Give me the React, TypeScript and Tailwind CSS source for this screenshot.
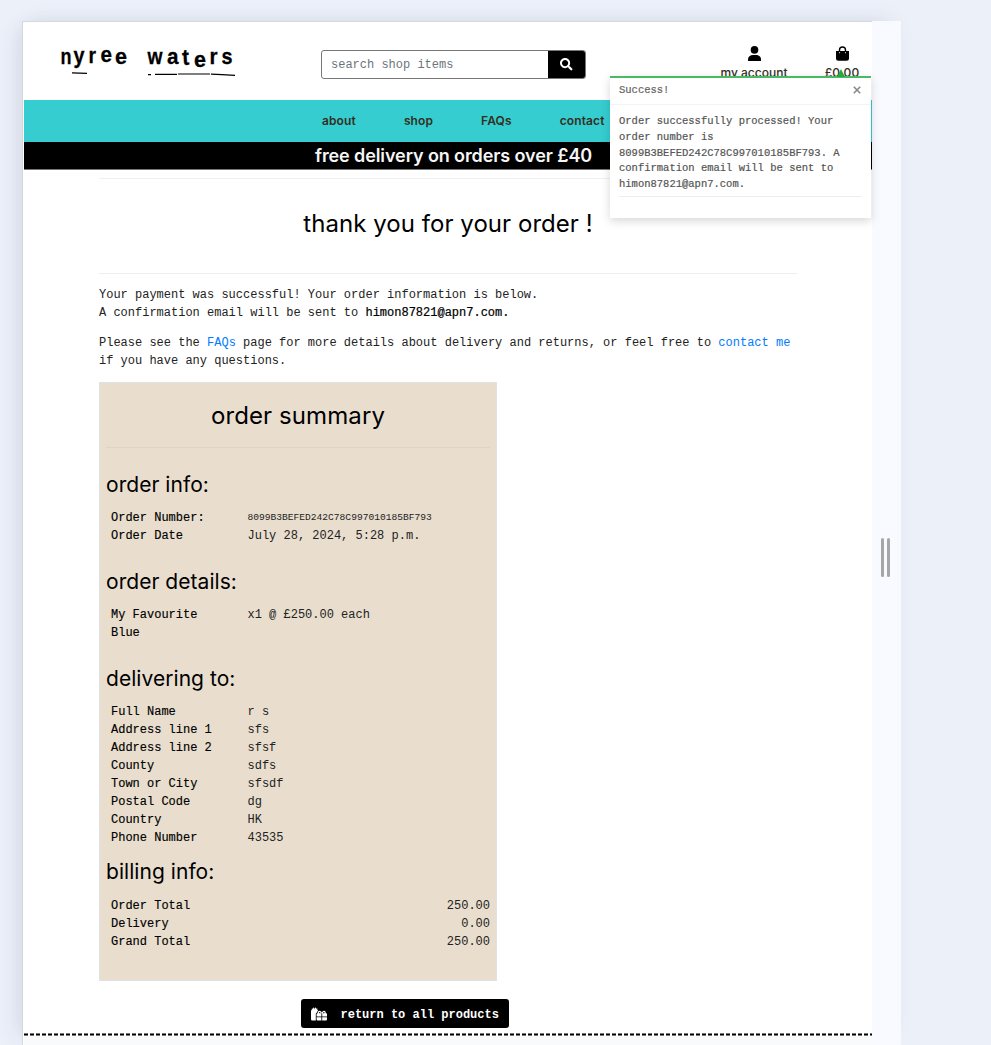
import React from "react";
import { FaGifts, FaSearch } from "react-icons/fa";

const logoLetters: [string, number, number, number, number][] = [
  ["n", 60.5, 63.5, 11, 0],
  ["y", 73.5, 63, 11, 0],
  ["r", 88.5, 63, 7.5, 0],
  ["e", 100.5, 62, 11.5, 0],
  ["e", 115, 64, 12, 0],
  ["w", 147.5, 64, 15, 0],
  ["a", 167, 64, 11.5, 0],
  ["t", 182.5, 65, 7, -3],
  ["e", 194, 66.5, 12, 0],
  ["r", 209.5, 64, 8, 0],
  ["s", 221.5, 64, 11, 0],
];

function Logo() {
  return (
    <svg className="ml-[31px] mt-[17px] h-[40px] w-[186px] shrink-0" viewBox="55 40 186 40">
      {logoLetters.map(([c, x, y, w, r], i) => (
        <text
          key={i}
          x={x}
          y={y}
          textLength={w}
          lengthAdjust="spacingAndGlyphs"
          transform={`rotate(${r} ${x} ${y})`}
          fontSize="22.5"
          fontWeight="700"
          fontFamily="'Liberation Sans', sans-serif"
          stroke="#000"
          strokeWidth="0.3"
        >
          {c}
        </text>
      ))}
      <path
        d="M72 72.8l15 .6M148 74.6h3M155 74.4h22M178 74h32M211 74.2l11 .4M222 74.6l13 .7"
        stroke="#000"
        strokeWidth="1.2"
        fill="none"
      />
    </svg>
  );
}

function UserIcon() {
  return (
    <svg className="mb-[3px] h-[15px] w-[15px]" viewBox="0 0 15 15">
      <circle cx="7.5" cy="3.9" r="3.8" />
      <path d="M1 15v-1.5C1 10.600 3.200 9 6 9h3c2.800 0 5 1.600 5 4.500V15z" />
    </svg>
  );
}

function BagIcon() {
  return (
    <svg className="mb-[3px] h-[15px] w-[15px]" viewBox="0 0 15 15">
      <path d="M4.500 6V4a3 3 0 0 1 6 0v2" fill="none" stroke="#000" strokeWidth="1.400" />
      <path d="M1 5h13v7.500a2.300 2.300 0 0 1-2.300 2.300H3.300A2.300 2.300 0 0 1 1 12.500z" />
      <circle cx="4.500" cy="6.700" r=".6" fill="#ddd" />
      <circle cx="10.500" cy="6.700" r=".6" fill="#ddd" />
    </svg>
  );
}

function Section({ title, className, children }: { title: string; className: string; children: React.ReactNode }) {
  return (
    <section className={className}>
      <h3 className="h-[32px] whitespace-nowrap font-['Inter',sans-serif] text-[21px] leading-[32px] tracking-[0.05px]">{title}</h3>
      <div className="pt-[8px]">{children}</div>
    </section>
  );
}

function Row({ label, children }: { label: string; children: React.ReactNode }) {
  return (
    <div className="flex leading-[18px]">
      <div className="w-[141.500px] shrink-0 pl-[5px] pr-[25px] [-webkit-text-stroke:0.15px_#000]">{label}</div>
      <div className="whitespace-nowrap text-[#222]">{children}</div>
    </div>
  );
}

function TotalRow({ label, value }: { label: string; value: string }) {
  return (
    <div className="flex justify-between pl-[5px] leading-[18px]">
      <span className="[-webkit-text-stroke:0.15px_#000]">{label}</span>
      <span className="text-[#222]">{value}</span>
    </div>
  );
}

function Toast() {
  return (
    <div className="absolute left-[586px] top-[53px] h-[142px] w-[261px] border-t-2 border-[#49b966] bg-white text-[10.5px] text-[#505050] shadow-[0_3px_9px_rgba(0,0,0,0.16)] [-webkit-text-stroke:0.2px_#606060]">
      <div className="absolute -top-[9px] left-[227px] h-0 w-0 border-x-[4px] border-b-[8px] border-x-transparent border-b-[#28a745]" />
      <div className="flex h-[27px] items-center justify-between border-b border-[#f1f3f4] pl-[9px] pr-[10px] text-[#666]">
        <span>Success!</span>
        <svg className="mb-[3px] h-[8px] w-[8px]" viewBox="0 0 8 8">
          <path d="M.8.8l6.4 6.4M7.2.8L.8 7.2" stroke="#888" strokeWidth="1.6" />
        </svg>
      </div>
      <div className="px-[9px] pt-[9px] leading-[15.8px]">
        <p className="whitespace-nowrap">
          Order successfully processed! Your
          <br />
          order number is
          <br />
          8099B3BEFED242C78C997010185BF793. A
          <br />
          confirmation email will be sent to
          <br />
          himon87821@apn7.com.
        </p>
        <hr className="mt-[3px] border-[#eee]" />
      </div>
    </div>
  );
}

export default function App() {
  return (
    <div className="h-[1045px] w-[991px] overflow-hidden bg-[#ebf0f9] pl-[22px] pt-[21px] font-['Liberation_Mono',monospace] text-[12px] text-black">
      <div className="flex h-[1024px] w-[879px] bg-[#f8faff] shadow-[-14px_0_20px_-8px_rgba(50,60,90,0.09),0_-8px_20px_-8px_rgba(50,60,90,0.09)]">
        <main className="relative h-full w-[850px] border-l border-t border-[#d5d9dd] bg-white pl-px pt-px">
          <div className="relative h-full w-[848px]">
            <header className="flex h-[77px] items-start">
              <Logo />
              <div className="ml-[80px] mt-[27px] flex h-[28.5px] w-[265px] overflow-hidden rounded-[3px] border border-[#777]">
                <div className="flex flex-1 items-center whitespace-nowrap pl-[9px] pt-[2px] text-[#6c757d]">search shop items</div>
                <div className="flex w-[37px] items-center justify-center bg-black text-white">
                  <FaSearch size={12.5} />
                </div>
              </div>
              <div className="ml-[118px] mt-[23px] flex w-[100px] flex-col items-center font-['Inter',sans-serif] font-medium leading-[18px] text-[#33301f]">
                <UserIcon />
                <span className="whitespace-nowrap">my account</span>
              </div>
              <div className="ml-[8px] mt-[23px] flex w-[60px] shrink-0 flex-col items-center font-['Inter',sans-serif] font-medium leading-[18px] text-[#33301f]">
                <BagIcon />
                <span className="tracking-[0.2px]">£0.00</span>
              </div>
            </header>
            <nav className="flex h-[42px] items-center gap-[48px] bg-[#35cdd0] pl-[298px] font-['Inter',sans-serif] text-[12px] font-semibold tracking-[0.12px] text-[#33301f]">
              <span>about</span>
              <span>shop</span>
              <span>FAQs</span>
              <span>contact</span>
            </nav>
            <div className="h-[28px] whitespace-nowrap border-b border-[#777] bg-black pl-[291px] font-['Inter',sans-serif] text-[18px] font-semibold leading-[28px] tracking-[-0.1px] text-[#f5f5f5]">
              free delivery on orders over £40
            </div>
            <div className="ml-[75px] w-[698px] pt-[8px]">
              <hr className="border-[#f0f0f0]" />
              <h1 className="h-[94px] whitespace-nowrap text-center font-['Inter',sans-serif] text-[24px] leading-[90px] tracking-[0.05px]">
                thank you for your order !
              </h1>
              <hr className="border-[#ededed]" />
              <div className="whitespace-nowrap pt-[12px] leading-[18px] text-[#222]">
                <p>
                  Your payment was successful! Your order information is below.
                  <br />A confirmation email will be sent to{" "}
                  <span className="text-black [-webkit-text-stroke:0.2px_#000]">himon87821@apn7.com.</span>
                </p>
                <p className="mt-[12px]">
                  Please see the <a className="text-[#007bff]">FAQs</a> page for more details about delivery and returns, or feel free to{" "}
                  <a className="text-[#007bff]">contact me</a>
                  <br />
                  if you have any questions.
                </p>
              </div>
              <div className="mt-[12px] h-[599px] w-[398px] border border-[#dee2e6] bg-[#e9dece] px-[6px]">
                <h2 className="h-[64px] whitespace-nowrap text-center font-['Inter',sans-serif] text-[24px] leading-[66px] tracking-[0.1px]">order summary</h2>
                <hr className="border-[#dfd4c4]" />
                <Section title="order info:" className="h-[97px] pt-[21px]">
                  <Row label="Order Number:">
                    <span className="block text-[9.6px]">8099B3BEFED242C78C997010185BF793</span>
                  </Row>
                  <Row label="Order Date">July 28, 2024, 5:28 p.m.</Row>
                </Section>
                <Section title="order details:" className="h-[97px] pt-[21px]">
                  <Row label="My Favourite Blue">x1 @ £250.00 each</Row>
                </Section>
                <Section title="delivering to:" className="h-[193px] pt-[21px]">
                  <Row label="Full Name">r s</Row>
                  <Row label="Address line 1">sfs</Row>
                  <Row label="Address line 2">sfsf</Row>
                  <Row label="County">sdfs</Row>
                  <Row label="Town or City">sfsdf</Row>
                  <Row label="Postal Code">dg</Row>
                  <Row label="Country">HK</Row>
                  <Row label="Phone Number">43535</Row>
                </Section>
                <Section title="billing info:" className="pt-[21px]">
                  <div className="pt-px">
                    <TotalRow label="Order Total" value="250.00" />
                    <TotalRow label="Delivery" value="0.00" />
                    <TotalRow label="Grand Total" value="250.00" />
                  </div>
                </Section>
              </div>
            </div>
            <button className="ml-[276.500px] mt-[18px] flex h-[29px] w-[208.500px] items-center whitespace-nowrap rounded-[3px] bg-black pl-[10px] font-bold text-white">
              <FaGifts size={16} />
              <span className="ml-[14px] pt-[2px]">return to all products</span>
            </button>
            <div className="mt-[5px] flex h-[3px] flex-col">
              <div className="h-px bg-[repeating-linear-gradient(90deg,#777_0_4px,#fff_4px_6px)]" />
              <div className="h-px bg-[repeating-linear-gradient(90deg,#000_0_4px,#fff_4px_6px)]" />
              <div className="h-px bg-[repeating-linear-gradient(90deg,#777_0_4px,#fff_4px_6px)]" />
            </div>
            <footer className="h-[10px] bg-[#f9fafb]" />
            <Toast />
          </div>
        </main>
        <div className="flex flex-1 gap-[3px] pl-[9px] pt-[517px]">
          <div className="h-[39px] w-[3px] rounded-full bg-[#a6a6a6]" />
          <div className="h-[39px] w-[3px] rounded-full bg-[#a6a6a6]" />
        </div>
      </div>
    </div>
  );
}
